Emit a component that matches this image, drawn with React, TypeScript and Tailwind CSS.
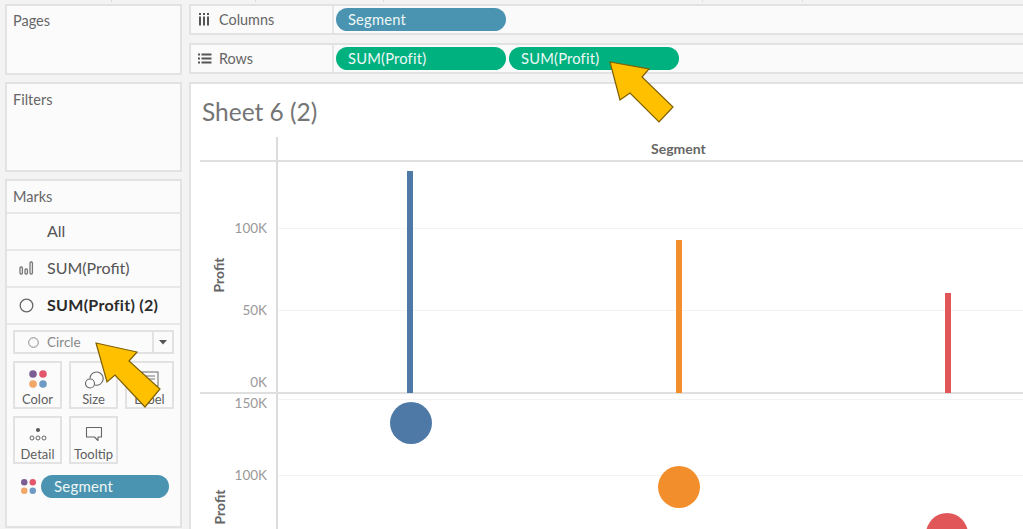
import React from "react";

const font = { fontFamily: '"Lato", "Open Sans", sans-serif' };

function Dots({ size = 20 }: { size?: number }) {
  return (
    <svg width={size} height={size} viewBox="0 0 20 20">
      <circle cx="5" cy="5" r="3.8" fill="#7b5e93" />
      <circle cx="15" cy="5" r="3.8" fill="#e4566b" />
      <circle cx="5" cy="15" r="3.8" fill="#f2a667" />
      <circle cx="15" cy="15" r="3.8" fill="#6f9ac6" />
    </svg>
  );
}

function Card({ label, icon }: { label: string; icon: React.ReactNode }) {
  return (
    <div className="h-[48px] border-2 border-[#e2e2e2] flex flex-col items-center pt-[5px] text-[13px] leading-[16px] text-[#5f5f5f]">
      <div className="h-[22px] flex items-center justify-center">{icon}</div>
      <div className="mt-[1px]">{label}</div>
    </div>
  );
}

function Pill({ label, color, w }: { label: string; color: string; w: string }) {
  return (
    <div className={"h-[23px] rounded-full flex items-center pl-[12px] text-[14.7px] tracking-[0.2px] text-[#eef7f5] " + color + " " + w}>
      {label}
    </div>
  );
}

function Shelf({ icon, label, children }: { icon: React.ReactNode; label: string; children: React.ReactNode }) {
  return (
    <div className="h-[31px] border-y-2 border-l-2 border-[#e2e2e2] bg-[#fafafa] flex items-stretch">
      <div className="w-[143px] border-r-2 border-[#e6e6e6] flex items-center pl-[7px] text-[14.4px] text-[#666]">
        <div className="w-[21px] flex items-center">{icon}</div>
        {label}
      </div>
      <div className="flex items-center gap-[3px] pl-[2px]">{children}</div>
    </div>
  );
}

function MarkRow({ icon, label, bold }: { icon?: React.ReactNode; label: string; bold?: boolean }) {
  return (
    <div className={"h-[37px] border-b-2 border-[#e8e8e8] flex items-center pl-[12px] pb-[1px] text-[16px] " + (bold ? "font-bold tracking-[0.3px] text-[#2b2b2b]" : "text-[#555]")}>
      <div className="w-[28px] flex items-center">{icon}</div>
      {label}
    </div>
  );
}

function AxisLabel({ y, children }: { y: number; children: string }) {
  return (
    <div className="absolute left-[20px] w-[56px] text-right text-[13.5px] leading-[16px] text-[#999]" style={{ top: y - 8 }}>
      {children}
    </div>
  );
}

function Grid({ y, strong }: { y: number; strong?: boolean }) {
  return strong ? (
    <div className="absolute left-[9px] right-0 h-[2px] bg-[#dfdfdf]" style={{ top: y }} />
  ) : (
    <div className="absolute left-[87px] right-0 h-[1px] bg-[#f3f3f3]" style={{ top: y }} />
  );
}

function Bar({ x, top, color }: { x: number; top: number; color: string }) {
  return <div className={"absolute w-[6px] " + color} style={{ left: x, top, height: 309 - top }} />;
}

function Dot({ x, y, color }: { x: number; y: number; color: string }) {
  return <div className={"absolute w-[42px] h-[42px] rounded-full " + color} style={{ left: x - 21, top: y - 21 }} />;
}

function Arrow({ points }: { points: string }) {
  return <polygon points={points} fill="#ffc000" stroke="#7f6000" strokeWidth="1.2" strokeLinejoin="miter" />;
}

function Tick({ x }: { x: number }) {
  return <div className="absolute top-0 w-[1px] h-[2px] bg-[#dcdcdc]" style={{ left: x }} />;
}

export default function App() {
  return (
    <div className="relative w-[1023px] h-[529px] overflow-hidden bg-[#f3f3f3] flex gap-[7px] pl-[5px] pt-[4px]" style={font}>
      {[111, 255, 383, 702, 802].map((x) => (
        <Tick key={x} x={x} />
      ))}
      <div className="w-[177px] flex flex-col gap-[7px] shrink-0">
        <div className="h-[71px] border-2 border-[#e2e2e2] bg-[#fbfbfb] pl-[6px] pt-[4px] text-[14.5px] text-[#666]">Pages</div>
        <div className="h-[90px] border-2 border-[#e2e2e2] bg-[#fbfbfb] pl-[6px] pt-[5px] text-[14.5px] text-[#666]">Filters</div>
        <div className="h-[349px] border-2 border-[#e2e2e2] bg-[#fbfbfb]">
          <div className="h-[33px] border-b-2 border-[#e8e8e8] pl-[6px] flex items-center text-[14.5px] text-[#666]">Marks</div>
          <MarkRow label="All" />
          <MarkRow
            label="SUM(Profit)"
            icon={
              <svg width="16" height="14" viewBox="0 0 16 14" fill="none" stroke="#777" strokeWidth="1.3">
                <rect x="1" y="6" width="2.4" height="7" rx="1" />
                <rect x="6" y="8" width="2.4" height="5" rx="1" />
                <rect x="11" y="1" width="2.4" height="12" rx="1" />
              </svg>
            }
          />
          <MarkRow
            bold
            label="SUM(Profit) (2)"
            icon={
              <svg width="15" height="15" viewBox="0 0 15 15" fill="none" stroke="#666" strokeWidth="1.3">
                <circle cx="7.5" cy="7.5" r="6.3" />
              </svg>
            }
          />
          <div className="px-[6px] pt-[5px]">
            <div className="h-[24px] border-2 border-[#e2e2e2] flex items-stretch">
              <div className="flex-1 flex items-center pl-[13px] pt-[1px] text-[13.5px] text-[#888]">
                <svg width="11" height="11" viewBox="0 0 11 11" fill="none" stroke="#888" strokeWidth="1" className="mr-[8px] -mt-[1px]">
                  <circle cx="5.5" cy="5.5" r="4.8" />
                </svg>
                Circle
              </div>
              <div className="w-[20px] border-l-2 border-[#e2e2e2] flex items-center justify-center">
                <svg width="8" height="5" viewBox="0 0 8 5">
                  <polygon points="0,0 8,0 4,4.5" fill="#555" />
                </svg>
              </div>
            </div>
            <div className="mt-[7px] grid grid-cols-[49px_49px_49px] gap-x-[7px] gap-y-[7px]">
              <Card label="Color" icon={<Dots />} />
              <Card
                label="Size"
                icon={
                  <svg width="20" height="20" viewBox="0 0 20 20" fill="none" stroke="#666" strokeWidth="1.1">
                    <circle cx="6" cy="14.5" r="4.5" />
                    <path d="M6 9.5A6.6 6.6 0 1 1 11 16" />
                  </svg>
                }
              />
              <Card
                label="Label"
                icon={
                  <svg width="18" height="16" viewBox="0 0 18 16" fill="none" stroke="#777" strokeWidth="1.1">
                    <rect x="1" y="1" width="16" height="14" />
                    <path d="M4 5h10M4 8h10" />
                  </svg>
                }
              />
              <Card
                label="Detail"
                icon={
                  <svg width="18" height="16" viewBox="0 0 18 16" fill="none" stroke="#666" strokeWidth="1">
                    <circle cx="9" cy="4" r="2" fill="#555" stroke="none" />
                    <circle cx="3" cy="12" r="2" />
                    <circle cx="9" cy="12" r="2" />
                    <circle cx="15" cy="12" r="2" />
                  </svg>
                }
              />
              <Card
                label="Tooltip"
                icon={
                  <svg width="18" height="16" viewBox="0 0 18 16" fill="none" stroke="#666" strokeWidth="1.1">
                    <path d="M1.5 1.5h15v9.5h-3.5v3.5l-3.5-3.5h-8z" strokeLinejoin="round" />
                  </svg>
                }
              />
            </div>
            <div className="mt-[11px] flex items-center pl-[7px] gap-[4px]">
              <Dots size={17} />
              <div className="w-[128px] h-[23px] rounded-full bg-[#4a94b1] flex items-center pl-[13px] text-[15px] tracking-[0.2px] text-[#eef7f5]">
                Segment
              </div>
            </div>
          </div>
        </div>
      </div>

      <div className="flex-1 flex flex-col gap-[8px] min-w-0">
        <Shelf
          label="Columns"
          icon={
            <svg width="12" height="13" viewBox="0 0 12 13" fill="#555">
              <rect x="1" y="0" width="2" height="2" />
              <rect x="5" y="0" width="2" height="2" />
              <rect x="9" y="0" width="2" height="2" />
              <rect x="1" y="3.5" width="2" height="9" />
              <rect x="5" y="3.5" width="2" height="9" />
              <rect x="9" y="3.5" width="2" height="9" />
            </svg>
          }
        >
          <Pill label="Segment" color="bg-[#4a94b1]" w="w-[170px]" />
        </Shelf>
        <Shelf
          label="Rows"
          icon={
            <svg width="14" height="11" viewBox="0 0 14 11" fill="#555">
              <rect x="0" y="0.5" width="2" height="2" />
              <rect x="3.5" y="0.5" width="10" height="2" />
              <rect x="0" y="4.5" width="2" height="2" />
              <rect x="3.5" y="4.5" width="10" height="2" />
              <rect x="0" y="8.5" width="2" height="2" />
              <rect x="3.5" y="8.5" width="10" height="2" />
            </svg>
          }
        >
          <Pill label="SUM(Profit)" color="bg-[#00b180]" w="w-[170px]" />
          <Pill label="SUM(Profit)" color="bg-[#00b180]" w="w-[170px]" />
        </Shelf>
        <div className="relative flex-1 border-t-2 border-l-2 border-[#e2e2e2] bg-white">
          <div className="pl-[11px] pt-[14px] text-[24.5px] leading-[28px] text-[#757575]">Sheet 6 (2)</div>
          <div className="absolute left-[85px] top-[53px] bottom-0 w-[2px] bg-[#dcdcdc]" />
          <Grid y={76} strong />
          <div className="absolute left-[460px] top-[57px] text-[14px] leading-[16px] font-bold text-[#666]">Segment</div>
          <Grid y={144} />
          <Grid y={226} />
          <Grid y={308} strong />
          <Grid y={315} />
          <Grid y={391} />
          <AxisLabel y={144}>100K</AxisLabel>
          <AxisLabel y={226}>50K</AxisLabel>
          <AxisLabel y={298}>0K</AxisLabel>
          <AxisLabel y={319}>150K</AxisLabel>
          <AxisLabel y={391}>100K</AxisLabel>
          <div className="absolute left-[6px] top-[183px] w-[44px] text-center -rotate-90 text-[14px] leading-[16px] font-bold text-[#666]">Profit</div>
          <div className="absolute left-[7px] top-[415px] w-[44px] text-center -rotate-90 text-[14px] leading-[16px] font-bold text-[#666]">Profit</div>
          <Bar x={216} top={87} color="bg-[#4e79a7]" />
          <Bar x={485} top={156} color="bg-[#f28e2b]" />
          <Bar x={754} top={209} color="bg-[#e15759]" />
          <Dot x={220} y={339} color="bg-[#4e79a7]" />
          <Dot x={488} y={403} color="bg-[#f28e2b]" />
          <Dot x={756} y={450} color="bg-[#e15759]" />
        </div>
      </div>

      <svg className="absolute inset-0 pointer-events-none" width="1023" height="529" viewBox="0 0 1023 529">
        <Arrow points="610,62 649,69 642,77 673,107 659,122 630,93 620,100" />
        <Arrow points="96,343 137,352 129,361 160,389 145,407 115,375 107,382" />
      </svg>
    </div>
  );
}
